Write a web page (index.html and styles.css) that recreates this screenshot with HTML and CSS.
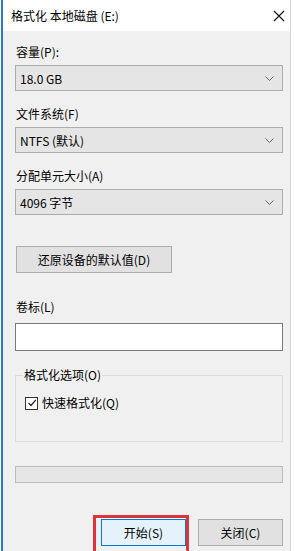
FILE: index.html
```html
<!DOCTYPE html>
<html lang="zh-CN">
<head>
    <meta charset="UTF-8">
    <meta name="viewport" content="width=device-width, initial-scale=1.0">
    <title>格式化 本地磁盘 (E:)</title>
    <link rel="stylesheet" href="styles.css">
</head>
<body>
<div class="window">
    <div class="titlebar">
        <span class="title">格式化 本地磁盘 (E:)</span>
        <svg class="close-x" width="12" height="12" viewBox="0 0 12 12">
            <path d="M1 1L11 11M11 1L1 11" stroke="#111" stroke-width="1.1" fill="none"/>
        </svg>
    </div>

    <div class="content">
        <div class="label first">容量(P):</div>
        <div class="combo">
            <span>18.0 GB</span>
            <svg class="chevron" width="9" height="5" viewBox="0 0 9 5"><path d="M0.5 0.5L4.5 4.5L8.5 0.5" stroke="#666" fill="none"/></svg>
        </div>

        <div class="label">文件系统(F)</div>
        <div class="combo">
            <span>NTFS (默认)</span>
            <svg class="chevron" width="9" height="5" viewBox="0 0 9 5"><path d="M0.5 0.5L4.5 4.5L8.5 0.5" stroke="#666" fill="none"/></svg>
        </div>

        <div class="label">分配单元大小(A)</div>
        <div class="combo">
            <span>4096 字节</span>
            <svg class="chevron" width="9" height="5" viewBox="0 0 9 5"><path d="M0.5 0.5L4.5 4.5L8.5 0.5" stroke="#666" fill="none"/></svg>
        </div>

        <button class="btn restore-btn">还原设备的默认值(D)</button>

        <div class="label volume">卷标(L)</div>
        <div class="text-input"></div>

        <fieldset class="options">
            <legend>格式化选项(O)</legend>
            <label class="check-row">
                <span class="checkbox">
                    <svg width="10" height="10" viewBox="0 0 10 10"><path d="M1.5 5L4 7.5L8.8 1.8" stroke="#222" stroke-width="1.2" fill="none"/></svg>
                </span>
                快速格式化(Q)
            </label>
        </fieldset>

        <div class="progress"></div>

        <div class="actions">
            <div class="highlight">
                <button class="btn start-btn">开始(S)</button>
            </div>
            <button class="btn">关闭(C)</button>
        </div>
    </div>
</div>
</body>
</html>
```

FILE: styles.css
```css
html, body {
    margin: 0;
    padding: 0;
    background: #fff;
}

body {
    font-family: "Noto Sans CJK SC", "Noto Sans", sans-serif;
    font-size: 12px;
    color: #000;
}

.window {
    margin-left: 1px;
    width: 287px;
    height: 551px;
    border-left: 2px solid #2b79c0;
    border-right: 1px solid #d6d6d6;
    background: #f0f0f0;
    display: flex;
    flex-direction: column;
    overflow: hidden;
}

.titlebar {
    height: 31px;
    flex: none;
    background: #fff;
    display: flex;
    align-items: center;
    justify-content: space-between;
    padding: 0 5px 0 8px;
}

.title {
    line-height: 16px;
    margin-top: 1px;
}

.close-x {
    margin-top: 1px;
}

.content {
    flex: 1;
    padding: 0 7px 0 12px;
    display: flex;
    flex-direction: column;
}

.label {
    line-height: 16px;
    height: 16px;
    margin: 15px 0 5px 1px;
}

.label.first {
    margin-top: 13px;
}

/* Combo boxes */
.combo {
    height: 24px;
    border: 1px solid #acacac;
    background: #e5e5e5;
    display: flex;
    align-items: center;
    justify-content: space-between;
    padding: 0 8px 0 4px;
}

.chevron {
    margin-top: 1px;
}

/* Buttons */
.btn {
    font-family: inherit;
    font-size: 12px;
    color: #000;
    height: 27px;
    border: 1px solid #adadad;
    background: #e1e1e1;
    padding: 0;
    width: 85px;
}

.restore-btn {
    width: 156px;
    margin: 31px 0 0 1px;
}

.volume {
    margin-top: 26px;
    margin-bottom: 8px;
}

.text-input {
    height: 26px;
    border: 1px solid #7a7a7a;
    background: #fff;
}

/* Group box */
.options {
    margin: 16px 0 0;
    padding: 0 0 0 7px;
    height: 73px;
    border: 1px solid #dcdcdc;
}

.options legend {
    padding: 0 1px;
    line-height: 16px;
}

.check-row {
    display: flex;
    align-items: center;
    gap: 4px;
    margin: 12px 0 0 2px;
    line-height: 16px;
}

.checkbox {
    width: 11px;
    height: 11px;
    border: 1px solid #333;
    background: #fff;
    display: flex;
    align-items: center;
    justify-content: center;
}

.progress {
    margin-top: 24px;
    height: 15px;
    border: 1px solid #bcbcbc;
    background: #e6e6e6;
}

.actions {
    margin-top: 36px;
    display: flex;
    justify-content: flex-end;
    gap: 12px;
}

.highlight {
    position: relative;
}

/* red annotation box around the start button */
.highlight::before {
    content: "";
    position: absolute;
    left: -8px;
    top: -4px;
    width: 90px;
    height: 40px;
    border: 3px solid #d8363c;
}

.start-btn {
    border-color: #0078d7;
    background: #e5f1fb;
}
```
